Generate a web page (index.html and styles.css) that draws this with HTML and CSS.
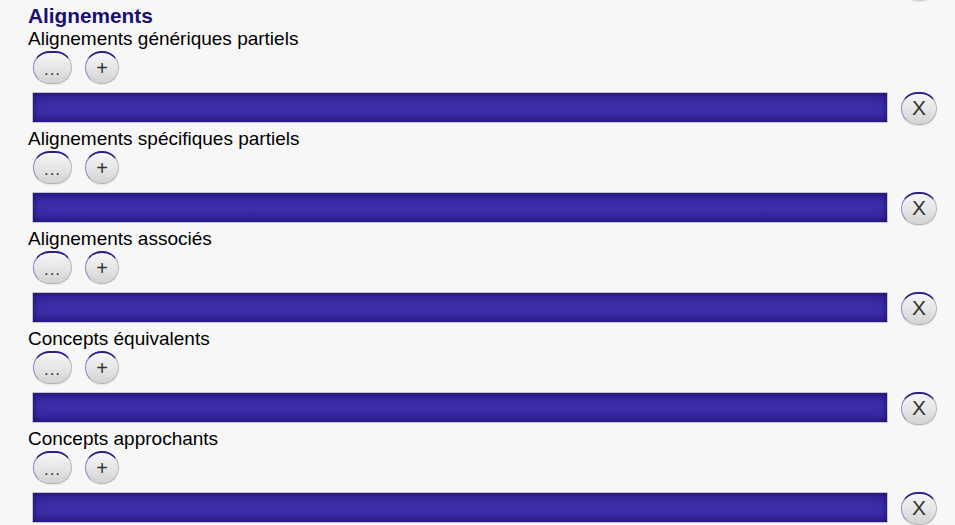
FILE: index.html
```html
<!DOCTYPE html>
<html lang="fr">
<head>
<meta charset="utf-8">
<title>Alignements</title>
<link rel="stylesheet" href="styles.css">
</head>
<body>
<div class="page">
  <div class="stub"><span class="btn btn-x ghost"></span></div>
  <h2 class="title">Alignements</h2>

  <section class="field">
    <div class="label">Alignements génériques partiels</div>
    <div class="actions"><button class="btn btn-more">...</button><button class="btn btn-add">+</button></div>
    <div class="value-row"><div class="value"></div><button class="btn btn-x">X</button></div>
  </section>

  <section class="field">
    <div class="label">Alignements spécifiques partiels</div>
    <div class="actions"><button class="btn btn-more">...</button><button class="btn btn-add">+</button></div>
    <div class="value-row"><div class="value"></div><button class="btn btn-x">X</button></div>
  </section>

  <section class="field">
    <div class="label">Alignements associés</div>
    <div class="actions"><button class="btn btn-more">...</button><button class="btn btn-add">+</button></div>
    <div class="value-row"><div class="value"></div><button class="btn btn-x">X</button></div>
  </section>

  <section class="field">
    <div class="label">Concepts équivalents</div>
    <div class="actions"><button class="btn btn-more">...</button><button class="btn btn-add">+</button></div>
    <div class="value-row"><div class="value"></div><button class="btn btn-x">X</button></div>
  </section>

  <section class="field">
    <div class="label">Concepts approchants</div>
    <div class="actions"><button class="btn btn-more">...</button><button class="btn btn-add">+</button></div>
    <div class="value-row"><div class="value"></div><button class="btn btn-x">X</button></div>
  </section>
</div>
</body>
</html>
```
FILE: styles.css
```css
html, body {
  margin: 0;
  padding: 0;
  background: #f7f7f7;
  overflow: hidden;
}

.page {
  padding-left: 28px;
  font-family: "Liberation Sans", Arial, sans-serif;
  color: #000;
}

.stub {
  height: 2px;
  overflow: hidden;
  display: flex;
  padding-left: 873px;
}

.stub .ghost {
  margin-top: -32px;
  border-bottom-color: #d0d0d0;
}

.title {
  margin: 2px 0 0 0;
  font-size: 20.8px;
  line-height: 24px;
  font-weight: bold;
  color: #1b0f6e;
}

.field {
  margin-bottom: 3px;
}

.label {
  font-size: 19px;
  line-height: 21px;
}

.actions {
  display: flex;
  gap: 13px;
  margin: 2px 0 0 5px;
}

.btn {
  box-sizing: border-box;
  height: 33px;
  padding: 0;
  margin: 0;
  display: flex;
  align-items: center;
  justify-content: center;
  font-family: "Liberation Sans", Arial, sans-serif;
  color: #333;
  border-radius: 17px;
  border: 1px solid #b4b4b4;
  border-top: 2px solid #2c1d8c;
  border-left-color: #8a80bb;
  background: linear-gradient(#f6f6f6, #e6e6e6 50%, #d3d3d3);
  box-shadow: inset 0 1px 1px rgba(255,255,255,0.8), 0 1px 1px rgba(0,0,0,0.08);
}

.btn-more {
  width: 39px;
  font-size: 17px;
  padding-top: 3px;
  letter-spacing: 1px;
}

.btn-add {
  width: 34px;
  font-size: 20px;
}

.btn-x {
  width: 36px;
  font-size: 21px;
  padding-bottom: 2px;
}

.value-row {
  display: flex;
  align-items: flex-start;
  gap: 13px;
  margin: 8px 0 0 4px;
}

.value {
  box-sizing: border-box;
  width: 856px;
  height: 31px;
  border: 1px solid #c6c6c6;
  background: linear-gradient(#33259a, #3d2fa8 50%, #33259a);
  box-shadow: inset 0 0 7px 1px #1f1276;
}
```
